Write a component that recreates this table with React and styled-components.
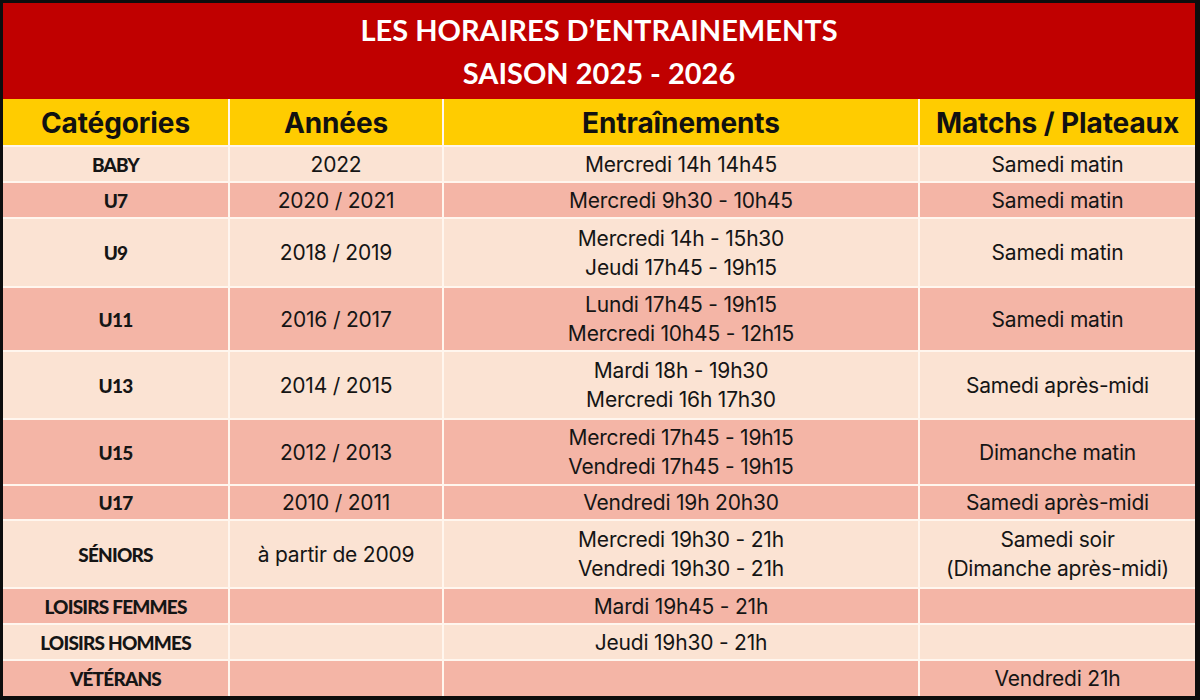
import React from "react";
import styled, { createGlobalStyle } from "styled-components";

const Global = createGlobalStyle`
  html, body { margin: 0; padding: 0; background: #0d0d0d; }
  * { box-sizing: border-box; }
`;

const Frame = styled.div`
  width: 1200px;
  height: 700px;
  background: #0d0d0d;
  padding: 3px 5px 4px 3px;
  display: flex;
  flex-direction: column;
`;

const TitleBar = styled.header`
  height: 96px;
  background: #c00000;
  color: #ffffff;
  display: flex;
  flex-direction: column;
  align-items: center;
  justify-content: center;
  font-family: Lato, "Liberation Sans", sans-serif;
  font-weight: 700;
  font-size: 29px;
  line-height: 43px;
`;

const Table = styled.div`
  display: flex;
  flex-direction: column;
  gap: 2px;
  background: #fff6ee;
  flex: 1;
`;

const Row = styled.div`
  display: grid;
  grid-template-columns: 225px 212px 474px 275px;
  column-gap: 2px;
  height: ${(p) => p.$h}px;
  flex: none;
`;

const tones = {
  head: "#ffcc00",
  light: "#fbe3d3",
  dark: "#f4b5a6",
};

const Cell = styled.div`
  background: ${(p) => tones[p.$tone]};
  display: flex;
  flex-direction: column;
  align-items: center;
  justify-content: center;
  text-align: center;
  color: #151515;
  font-family: Inter, "DejaVu Sans", sans-serif;
  font-size: 21px;
  line-height: 29px;
  letter-spacing: -0.2px;
  white-space: nowrap;
`;

const HeadCell = styled(Cell)`
  font-weight: 700;
  font-size: 28px;
  letter-spacing: -0.1px;
  color: #111;
  padding-top: 2px;
`;

const CatCell = styled(Cell)`
  font-family: Lato, "Liberation Sans", sans-serif;
  font-weight: 900;
  font-size: 19px;
  letter-spacing: -0.8px;
`;

const rows = [
  { cat: "BABY", year: "2022", train: ["Mercredi 14h 14h45"], match: ["Samedi matin"], tone: "light", h: 34 },
  { cat: "U7", year: "2020 / 2021", train: ["Mercredi 9h30 - 10h45"], match: ["Samedi matin"], tone: "dark", h: 34 },
  { cat: "U9", year: "2018 / 2019", train: ["Mercredi 14h - 15h30", "Jeudi 17h45 - 19h15"], match: ["Samedi matin"], tone: "light", h: 67 },
  { cat: "U11", year: "2016 / 2017", train: ["Lundi 17h45 - 19h15", "Mercredi 10h45 - 12h15"], match: ["Samedi matin"], tone: "dark", h: 62 },
  { cat: "U13", year: "2014 / 2015", train: ["Mardi 18h - 19h30", "Mercredi 16h 17h30"], match: ["Samedi après-midi"], tone: "light", h: 66 },
  { cat: "U15", year: "2012 / 2013", train: ["Mercredi 17h45 - 19h15", "Vendredi 17h45 - 19h15"], match: ["Dimanche matin"], tone: "dark", h: 64 },
  { cat: "U17", year: "2010 / 2011", train: ["Vendredi 19h 20h30"], match: ["Samedi après-midi"], tone: "dark", h: 33 },
  { cat: "SÉNIORS", year: "à partir de 2009", train: ["Mercredi 19h30 - 21h", "Vendredi 19h30 - 21h"], match: ["Samedi soir", "(Dimanche après-midi)"], tone: "light", h: 66 },
  { cat: "LOISIRS FEMMES", year: "", train: ["Mardi 19h45 - 21h"], match: [], tone: "dark", h: 34 },
  { cat: "LOISIRS HOMMES", year: "", train: ["Jeudi 19h30 - 21h"], match: [], tone: "light", h: 34 },
  { cat: "VÉTÉRANS", year: "", train: [], match: ["Vendredi 21h"], tone: "dark", h: 35 },
];

const Lines = ({ items }) => items.map((t, i) => <span key={i}>{t}</span>);

export default function App() {
  return (
    <>
      <Global />
      <Frame>
        <TitleBar>
          <span>LES HORAIRES D’ENTRAINEMENTS</span>
          <span>SAISON 2025 - 2026</span>
        </TitleBar>
        <Table>
          <Row $h={46}>
            <HeadCell $tone="head">Catégories</HeadCell>
            <HeadCell $tone="head">Années</HeadCell>
            <HeadCell $tone="head">Entraînements</HeadCell>
            <HeadCell $tone="head">Matchs / Plateaux</HeadCell>
          </Row>
          {rows.map((r) => (
            <Row key={r.cat} $h={r.h}>
              <CatCell $tone={r.tone}>{r.cat}</CatCell>
              <Cell $tone={r.tone}>{r.year}</Cell>
              <Cell $tone={r.tone}>
                <Lines items={r.train} />
              </Cell>
              <Cell $tone={r.tone}>
                <Lines items={r.match} />
              </Cell>
            </Row>
          ))}
        </Table>
      </Frame>
    </>
  );
}
